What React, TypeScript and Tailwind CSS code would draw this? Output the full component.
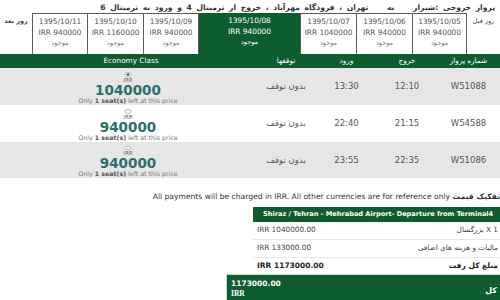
import React from 'react';

const GREEN = 'bg-[#0e5d2e]';

const tabs = [
  { date: '1395/10/11', price: 'IRR 940000', w: 'w-[55px]' },
  { date: '1395/10/10', price: 'IRR 1160000', w: 'w-[56px]' },
  { date: '1395/10/09', price: 'IRR 940000', w: 'w-[56px]', edge: true },
  { date: '1395/10/08', price: 'IRR 940000', w: 'w-[101px]', active: true },
  { date: '1395/10/07', price: 'IRR 1040000', w: 'w-[56px]' },
  { date: '1395/10/06', price: 'IRR 940000', w: 'w-[56px]' },
  { date: '1395/10/05', price: 'IRR 940000', w: 'w-[55px]', edge: true },
];

const flights = [
  { no: 'W51088', dep: '12:10', arr: '13:30', price: '1040000', checked: true, bg: 'bg-[#e6e6e6]', h: 'h-[37px]' },
  { no: 'W54588', dep: '21:15', arr: '22:40', price: '940000', checked: false, bg: 'bg-white', h: 'h-[37px]' },
  { no: 'W51086', dep: '22:35', arr: '23:55', price: '940000', checked: false, bg: 'bg-[#e6e6e6]', h: 'h-[36px]' },
];

const Radio = ({ checked }: { checked: boolean }) => (
  <svg width="10" height="7" viewBox="0 0 10 7" className="block">
    <ellipse cx="5" cy="3.5" rx="4.5" ry="3" fill="#f4f4f4" stroke="#9a9a9a" strokeWidth="0.8" />
    {checked && <ellipse cx="5" cy="3.5" rx="2" ry="1.4" fill="#333" />}
  </svg>
);

const DateTab = ({ t }: { t: (typeof tabs)[number] }) => (
  <div
    className={`${t.w} h-full flex flex-col items-center pt-[3px] ${
      t.active ? `${GREEN} text-white` : `border-l border-t border-[#5a5a5a] text-[#555] ${t.edge ? 'border-r' : ''}`
    }`}
  >
    <div className="text-[7.4px] leading-[10px]">{t.date}</div>
    <div className="text-[7.4px] leading-[11px]">{t.price}</div>
    <div className={`text-[6.5px] leading-[11px] ${t.active ? 'text-white' : 'text-[#777]'}`}>موجود</div>
  </div>
);

const FlightRow = ({ f }: { f: (typeof flights)[number] }) => (
  <div className={`flex ${f.h} ${f.bg} text-[8.5px] text-[#555]`}>
    <div className="w-[256px] flex flex-col items-center pt-[4px]">
      <Radio checked={f.checked} />
      <div className="text-[5.5px] leading-[7px] text-[#666]">IRR</div>
      <div className="text-[13.5px] leading-[13px] font-bold text-[#2d6e6e]">{f.price}</div>
      <div className="text-[6.3px] leading-[8px] text-[#777]">
        Only <b className="text-[#555]">1 seat(s)</b> left at this price
      </div>
    </div>
    <div className="w-[60px] flex items-center justify-center" dir="rtl">بدون توقف</div>
    <div className="w-[61px] flex items-center justify-center">{f.arr}</div>
    <div className="w-[60px] flex items-center justify-center">{f.dep}</div>
    <div className="w-[63px] flex items-center justify-center">{f.no}</div>
  </div>
);

const App = () => {
  return (
    <div className="relative w-[500px] h-[300px] overflow-hidden bg-white font-['DejaVu_Sans',sans-serif]">
      {/* Route title */}
      <div className="w-[500px] h-[13px] pt-[3px] pr-[5px] flex justify-end overflow-hidden">
        <span
          dir="rtl"
          className="text-[7.6px] leading-[9px] font-bold text-[#333] whitespace-nowrap [word-spacing:2px]"
        >
          پرواز خروجی :شیراز{'\u00A0\u00A0\u00A0\u00A0'}به{'\u00A0\u00A0\u00A0\u00A0'}تهران ، فرودگاه مهرآباد ، خروج از ترمینال 4 و ورود به ترمینال 6
        </span>
      </div>

      {/* Date tabs */}
      <div className="flex h-[41px]">
        <div className="w-[32px] pt-[4px] text-center text-[6.5px] font-bold text-[#444] overflow-hidden" dir="rtl">
          روز بعد
        </div>
        {tabs.map((t) => (
          <DateTab key={t.date} t={t} />
        ))}
        <div className="w-[33px] pt-[4px] text-center text-[6.5px] text-[#444] overflow-hidden" dir="rtl">
          روز قبل
        </div>
      </div>

      {/* Table header */}
      <div className={`flex h-[14px] ${GREEN} text-white text-[7.3px] leading-[14px]`}>
        <div className="w-[256px] text-center pl-[6px]">Economy Class</div>
        <div className="w-[60px] text-center">توقفها</div>
        <div className="w-[61px] text-center">ورود</div>
        <div className="w-[60px] text-center">خروج</div>
        <div className="w-[63px] text-center">شماره پرواز</div>
      </div>

      {flights.map((f) => (
        <FlightRow key={f.no} f={f} />
      ))}

      {/* Price breakdown */}
      <div className="pt-[15px] text-right text-[7.6px] leading-[8px] text-[#333]">
        All payments will be charged in IRR. All other currencies are for reference only <b>تفکیک قیمت</b>
      </div>

      <div className="flex justify-end mt-[6px]">
        <div className="w-[247px]">
          <div className={`h-[15px] ${GREEN} pl-[10px] text-white text-[6.6px] leading-[15px] font-bold whitespace-nowrap overflow-hidden`}>
            Shiraz / Tehran - Mehrabad Airport- Departure from Terminal4
          </div>
          <div className="h-[18px] flex items-center justify-between pl-[4px] pr-[2px] border-b border-[#e8e8e8] text-[7.3px] text-[#444]">
            <span>IRR 1040000.00</span>
            <span dir="rtl">1 X بزرگسال</span>
          </div>
          <div className="h-[18px] flex items-center justify-between pl-[4px] pr-[2px] border-b border-[#e8e8e8] text-[7.3px] text-[#444]">
            <span>IRR 133000.00</span>
            <span dir="rtl">مالیات و هزینه های اضافی</span>
          </div>
          <div className="h-[16px] flex items-center justify-between pl-[4px] pr-[2px] text-[7.5px] font-bold text-[#222]">
            <span>IRR 1173000.00</span>
            <span dir="rtl">مبلغ کل رفت</span>
          </div>
        </div>
      </div>

      <div className="flex justify-end">
        <div className={`w-[274px] h-[26px] ${GREEN} border-l border-t border-[#c8d8cc] flex justify-between text-white font-bold`}>
          <div className="pl-[4px] pt-[4px]">
            <div className="text-[7.5px] leading-[10px]">1173000.00</div>
            <div className="text-[7.5px] leading-[10px] font-['Liberation_Serif',serif]">IRR</div>
          </div>
          <div className="pr-[3px] pt-[11px] text-[8px] leading-[10px]" dir="rtl">کل</div>
        </div>
      </div>
    </div>
  );
};

export default App;
